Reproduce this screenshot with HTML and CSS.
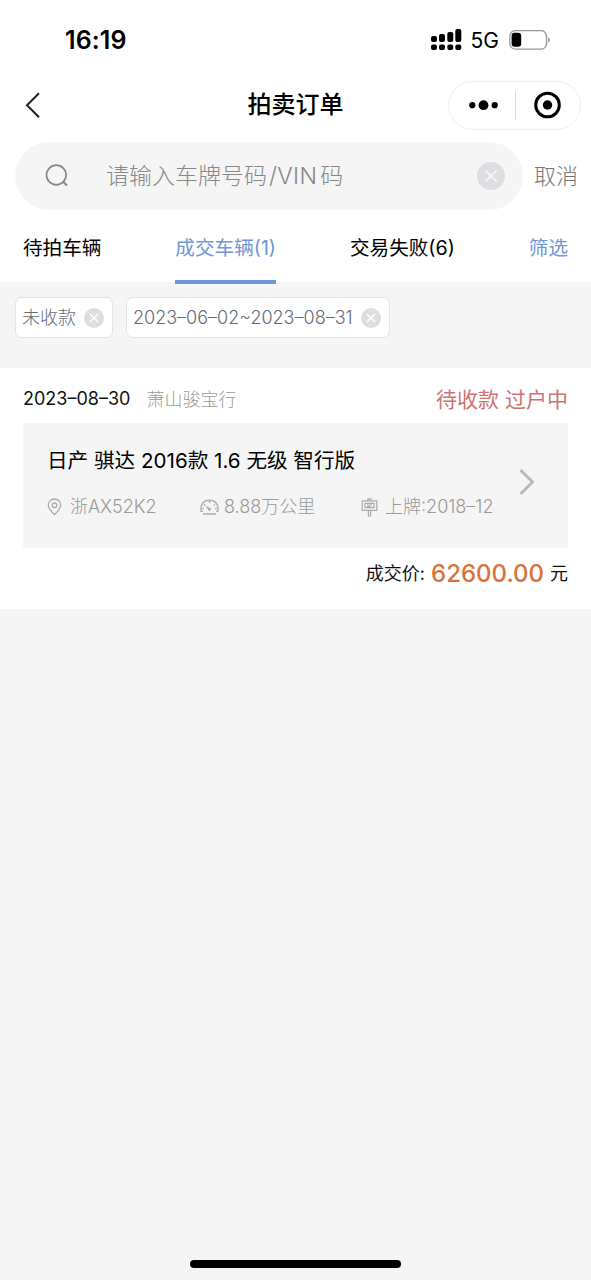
FILE: index.html
```html
<!DOCTYPE html>
<html lang="zh-CN">
<head>
<meta charset="utf-8">
<title>拍卖订单</title>
<link rel="stylesheet" href="styles.css">
</head>
<body>
<div class="screen">
  <header class="top">
    <div class="status">
      <span class="clock">16:19</span>
      <div class="status-icons">
        <svg class="signal" width="31" height="22" viewBox="0 0 31 22">
          <rect x="0" y="7" width="6" height="6" rx="2"/><rect x="8" y="5" width="6" height="8" rx="2"/><rect x="16.300" y="3" width="6" height="10" rx="2"/><rect x="24.300" y="0" width="6" height="13" rx="2"/>
          <rect x="0" y="15.500" width="6" height="5.500" rx="2"/><rect x="8" y="15.500" width="6" height="5.500" rx="2"/><rect x="16.300" y="15.500" width="6" height="5.500" rx="2"/><rect x="24.300" y="15.500" width="6" height="5.500" rx="2"/>
        </svg>
        <span class="network">5G</span>
        <svg class="battery" width="42" height="20" viewBox="0 0 42 20">
          <rect x=".9" y=".6" width="36.600" height="18.600" rx="5.500" fill="none" stroke="#999" stroke-width="1.300"/>
          <rect x="2.600" y="2.800" width="9.600" height="14" rx="3"/>
          <path d="M39 7.200c2.500.8 2.500 4.600 0 5.400z" fill="#999"/>
        </svg>
      </div>
    </div>
    <nav class="nav">
      <svg class="back" width="16" height="28" viewBox="0 0 16 28"><path d="M14 2.200 2 14.200l12 12" fill="none" stroke="#222" stroke-width="2"/></svg>
      <h1 class="title">拍卖订单</h1>
      <div class="capsule">
        <svg width="66" height="48" viewBox="0 0 66 48"><circle cx="23.300" cy="24.200" r="3.100"/><circle cx="34.500" cy="24.200" r="4.900"/><circle cx="45.700" cy="24.200" r="3.100"/></svg>
        <span class="capsule-line"></span>
        <svg width="64" height="48" viewBox="0 0 64 48"><circle cx="31.500" cy="24" r="11.800" fill="none" stroke="#000" stroke-width="3"/><circle cx="31.500" cy="24" r="4.700"/></svg>
      </div>
    </nav>
    <div class="search-row">
      <div class="search">
        <svg class="search-icon" width="24" height="24" viewBox="0 0 24 24" fill="none" stroke="#888"><circle cx="11.300" cy="11" r="9.800" stroke-width="1.700"/><path d="m18 17.700 4 3.800" stroke-width="2"/></svg>
        <span class="placeholder">请输入车牌号码<span class="latin">/VIN</span>码</span>
        <svg class="clear" width="28" height="28" viewBox="0 0 28 28"><circle cx="14" cy="14" r="14" fill="#dcdee1"/><path d="m8.300 8.300 11.400 11.400m0-11.400L8.300 19.700" stroke="#f5f5f5" stroke-width="1.800"/></svg>
      </div>
      <span class="cancel">取消</span>
    </div>
    <div class="tabs">
      <span class="tab">待拍车辆</span>
      <span class="tab active">成交车辆(1)</span>
      <span class="tab">交易失败(6)</span>
      <span class="tab filter">筛选</span>
    </div>
  </header>

  <div class="chips">
    <div class="chip"><span class="chip-text">未收款</span><svg width="20" height="20" viewBox="0 0 28 28"><circle cx="14" cy="14" r="14" fill="#dcdee1"/><path d="m8.300 8.300 11.400 11.400m0-11.400L8.300 19.700" stroke="#fff" stroke-width="2"/></svg></div>
    <div class="chip"><span class="chip-text range">2023–06–02~2023–08–31</span><svg width="20" height="20" viewBox="0 0 28 28"><circle cx="14" cy="14" r="14" fill="#dcdee1"/><path d="m8.300 8.300 11.400 11.400m0-11.400L8.300 19.700" stroke="#fff" stroke-width="2"/></svg></div>
  </div>

  <article class="order">
    <div class="order-head">
      <span class="date">2023–08–30</span>
      <span class="dealer">萧山骏宝行</span>
      <span class="state">待收款 过户中</span>
    </div>
    <div class="car">
      <div class="car-body">
        <div class="car-name">日产 骐达 2016款 1.6 无级 智行版</div>
        <div class="specs">
          <div class="spec plate">
            <svg width="15" height="18" viewBox="0 0 15 18" fill="none" stroke="#aaa" stroke-width="1.300"><path d="M7.500 16.700C4.500 13.800 1.300 10.500 1.300 7.200a6.200 6.200 0 0 1 12.400 0c0 3.300-3.200 6.600-6.200 9.500z"/><circle cx="7.500" cy="7.300" r="2.300"/></svg>
            <span>浙AX52K2</span>
          </div>
          <div class="spec mileage">
            <svg width="19" height="18" viewBox="0 0 19 18" fill="none" stroke="#aaa" stroke-width="1.300"><path d="M2.800 13.300H1.200C-.4 6.700 4 2.200 9.500 2.200s9.900 4.500 8.300 11.100h-1.600M3 16h13M9.500 3v2M4 6.500l1.300 1.100M15 6.500l-1.300 1.100M2.300 10.500h1.500M16.700 10.500h-1.500"/><path d="m6.500 8.500 4.400 2.400-1.600 2z" fill="#aaa" stroke="#aaa" stroke-width=".8"/></svg>
            <span>8.88万公里</span>
          </div>
          <div class="spec licensed">
            <svg width="17" height="19" viewBox="0 0 17 19" fill="none" stroke="#aaa" stroke-width="1.200"><path d="M1.200 2.800h14.600v9.600H1.200zM7 2.500V.9h3v1.600M7.400 12.400V18h2.200v-5.600M4 5.400h9v4.200H4zM6 7h5M6 8.500h3.500"/></svg>
            <span>上牌:2018–12</span>
          </div>
        </div>
      </div>
      <svg class="arrow" width="18" height="28" viewBox="0 0 18 28"><path d="m2.500 2 12 12-12 12" fill="none" stroke="#b9b9b9" stroke-width="3"/></svg>
    </div>
    <div class="total">
      <span class="total-label">成交价:</span>
      <span class="amount">62600.00</span>
      <span class="unit">元</span>
    </div>
  </article>
  <div class="home-bar"></div>
</div>
</body>
</html>
```
FILE: styles.css
```css
* { box-sizing: border-box; }
body {
  margin: 0;
  background: #f5f5f5;
  color: #111;
  font-family: Inter, "Noto Sans CJK SC", sans-serif;
}
svg { display: block; flex: none; }
.screen {
  width: 591px;
  height: 1280px;
  display: flex;
  flex-direction: column;
  white-space: nowrap;
  overflow: hidden;
}
.top { background: #fff; height: 282px; flex: none; }

.status {
  height: 80px;
  padding: 0 40px 0 65px;
  display: flex;
  align-items: center;
  justify-content: space-between;
}
.clock { font-size: 25px; font-weight: 600; color: #000; letter-spacing: .1px; }
.status-icons { display: flex; align-items: center; }
.network { font-size: 21px; color: #000; margin: 1px 10px 0 9px; }

.nav {
  height: 50px;
  padding: 0 10px 0 25px;
  display: grid;
  grid-template-columns: 133px 1fr 133px;
  align-items: center;
}
.title {
  margin: 0;
  padding-right: 15px;
  text-align: center;
  font-size: 24px;
  line-height: 34px;
  font-weight: 500;
  color: #000;
}
.capsule {
  height: 49px;
  border: 1px solid #eee;
  border-radius: 25px;
  display: flex;
  align-items: center;
}
.capsule-line { width: 1px; height: 29px; background: #ddd; }

.search-row { display: flex; align-items: center; padding: 12px 0 0 15px; }
.search {
  width: 508px;
  height: 68px;
  border-radius: 34px;
  background: #f5f5f5;
  padding: 0 18px 0 30px;
  display: flex;
  align-items: center;
}
.placeholder { margin-left: 37px; flex: 1; font-size: 23px; font-weight: 300; line-height: 34px; color: #888; }
.latin { letter-spacing: .3px; margin: 0 3px 0 2px; }
.cancel { margin-left: 11px; font-size: 22px; font-weight: 300; line-height: 34px; color: #777; }

.tabs {
  height: 74px;
  padding: 0 23px;
  display: flex;
  justify-content: space-between;
}
.tab { font-size: 19.600px; line-height: 76px; height: 74px; color: #000; }
.active { color: #7096d8; border-bottom: 4px solid #7096d8; position: relative; }
.filter { color: #7096d8; }

.chips { height: 86px; flex: none; padding: 15px; display: flex; gap: 13px; }
.chip {
  height: 41px;
  padding: 0 8px 0 6px;
  border: 1px solid #e4e4e6;
  border-radius: 7px;
  background: #fff;
  display: flex;
  align-items: center;
  gap: 8px;
}
.chip-text { font-size: 18px; line-height: 28px; font-weight: 300; color: #646b78; }

.order { background: #fff; height: 241px; flex: none; padding: 0 23px; }
.order-head { height: 55px; padding-top: 5px; display: flex; align-items: center; }
.date { font-size: 18px; }
.dealer { margin-left: 16px; font-size: 18px; font-weight: 300; color: #999; }
.state { margin-left: auto; font-size: 21px; color: #cd7371; }
.car {
  height: 125px;
  padding: 0 32px 0 24px;
  background: #f5f5f5;
  display: flex;
  justify-content: space-between;
}
.arrow { margin-top: 45px; }
.car-body { padding-top: 22px; }
.car-name { font-size: 20.600px; line-height: 32px; color: #000; }
.specs { display: flex; margin-top: 16px; }
.spec { display: flex; align-items: center; font-size: 18px; line-height: 28px; font-weight: 300; color: #999; }
.plate { width: 153px; gap: 8px; }
.mileage { width: 161px; gap: 5px; }
.licensed { gap: 7px; }
.total { height: 52px; display: flex; justify-content: flex-end; align-items: center; line-height: 34px; }
.total-label { font-size: 18px; }
.amount { margin: 0 6px; font-size: 24px; font-weight: 500; color: #da713c; }
.unit { font-size: 18px; }
.home-bar {
  width: 211px;
  height: 8px;
  margin: auto auto 12px 190px;
  border-radius: 4px;
  background: #000;
}
```
